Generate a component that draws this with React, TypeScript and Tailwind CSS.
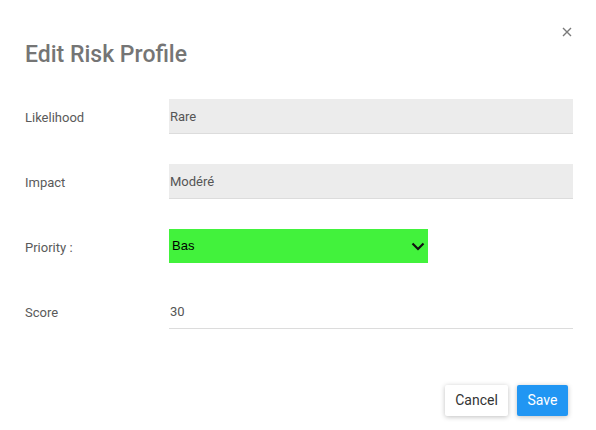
import React from "react"

const font = { fontFamily: "Roboto, 'Liberation Sans', sans-serif" }

function ReadOnlyField({ label, value }: { label: string; value: string }) {
  return (
    <div className="flex items-center h-[35px]">
      <div className="w-[144px] pt-[3px] text-[13px] text-[#5a5a5a]">{label}</div>
      <div className="flex-1 h-full flex items-center bg-[#ececec] border-b border-[#dcdcdc] pl-px pt-[2px] text-[13px] text-[#555]">
        {value}
      </div>
    </div>
  )
}

export default function App() {
  return (
    <div className="w-[596px] h-[430px] bg-white relative pl-[25px] pr-[23px]" style={font}>
      <button className="absolute left-[562px] top-[27px] w-[10px] h-[10px] flex items-center justify-center">
        <svg width="10" height="10" viewBox="0 0 10 10">
          <path d="M1 1L9 9M9 1L1 9" stroke="#7a7a7a" strokeWidth="1.4" />
        </svg>
      </button>

      <h2 className="pt-[39px] text-[23px] leading-[32px] font-medium text-[#757575]">Edit Risk Profile</h2>

      <div className="mt-[28px] flex flex-col gap-[30px]">
        <ReadOnlyField label="Likelihood" value="Rare" />
        <ReadOnlyField label="Impact" value="Modéré" />

        <div className="flex items-start h-[35px]">
          <div className="w-[144px] h-[35px] flex items-center pt-[3px] text-[13px] text-[#5a5a5a]">Priority :</div>
          <div className="w-[259px] h-[34px] bg-[#42f23c] flex items-center justify-between pl-[3px] pr-[3px]">
            <span className="text-[13px] text-black" style={{ fontFamily: "'Liberation Sans', Arial, sans-serif" }}>
              Bas
            </span>
            <svg width="14" height="9" viewBox="0 0 14 9">
              <path d="M1.5 1.5L7 7L12.5 1.5" stroke="#111" strokeWidth="2.2" fill="none" />
            </svg>
          </div>
        </div>

        <div className="flex items-center h-[35px]">
          <div className="w-[144px] pt-[3px] text-[13px] text-[#5a5a5a]">Score</div>
          <div className="flex-1 h-full flex items-center border-b border-[#dcdcdc] pl-px pt-[2px] text-[13px] text-[#555]">
            30
          </div>
        </div>
      </div>

      <div className="mt-[56px] flex justify-end gap-[9px] pr-[5px]">
        <button className="w-[63px] h-[31px] rounded-[2px] bg-white text-[14px] text-[#333] shadow-[0_1px_5px_rgba(0,0,0,0.25)]">
          Cancel
        </button>
        <button className="w-[51px] h-[31px] rounded-[2px] bg-[#2196f3] text-[14px] text-white shadow-[0_1px_5px_rgba(0,0,0,0.25)]">
          Save
        </button>
      </div>
    </div>
  )
}
